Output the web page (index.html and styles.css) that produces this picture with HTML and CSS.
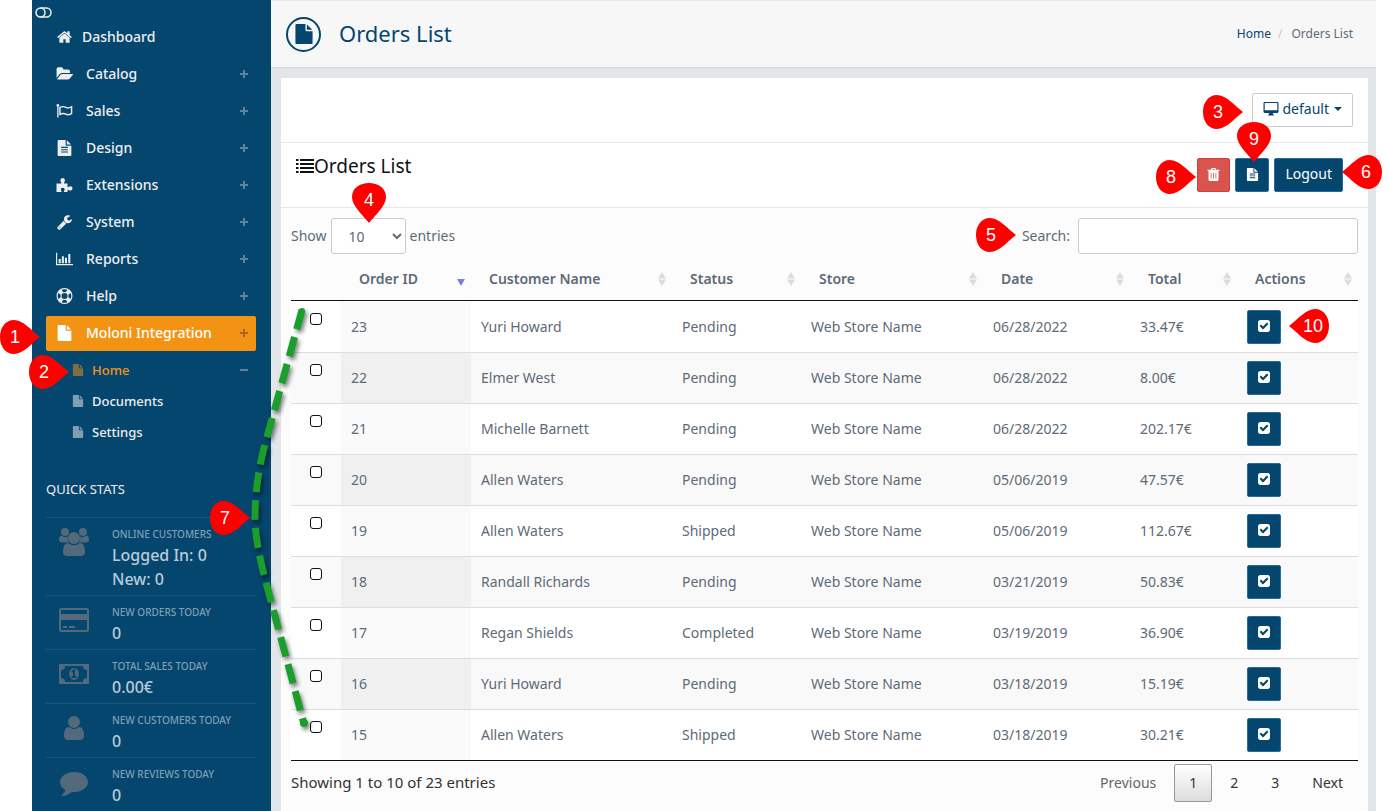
FILE: index.html
```html
<!DOCTYPE html>
<html lang="en">
<head>
  <meta charset="UTF-8">
  <meta name="viewport" content="width=device-width, initial-scale=1">
  <title>Orders List</title>
  <link rel="stylesheet" href="styles.css">
</head>
<body>

<!-- Icons -->
<svg class="sprite" aria-hidden="true">
  <symbol id="i-home" viewBox="0 0 1792 1792"><path d="M1472 992v480q0 26-19 45t-45 19h-384v-384h-256v384h-384q-26 0-45-19t-19-45v-480q0-1 .5-3t.5-3l575-474 575 474q1 2 1 6zm223-69l-62 74q-8 9-21 11h-3q-13 0-21-7l-692-577-692 577q-12 8-24 7-13-2-21-11l-62-74q-8-10-7-23.5t11-21.5l719-599q32-26 76-26t76 26l244 204v-195q0-14 9-23t23-9h192q14 0 23 9t9 23v408l219 182q10 8 11 21.5t-7 23.5z"/></symbol>
  <symbol id="i-folder" viewBox="0 0 1944 1792"><path d="M1943 952q0 31-31 66l-336 396q-43 51-120.5 86.5t-143.5 35.5h-1088q-34 0-60.5-13t-26.5-43q0-31 31-66l336-396q43-51 120.5-86.5t143.5-35.5h1088q34 0 60.5 13t26.5 43zm-343-344v160h-832q-94 0-197 47.5t-164 119.5l-337 396-5 6q0-4-.5-12.5t-.5-12.5v-960q0-92 66-158t158-66h320q92 0 158 66t66 158v32h544q92 0 158 66t66 158z"/></symbol>
  <symbol id="i-flag" viewBox="0 0 18 16"><path d="M2 2v13" stroke="currentColor" stroke-width="1.4" fill="none"/><circle cx="2" cy="2" r="1.4"/><path d="M4.2 4.2c3-1.6 4.800-.8 6.300 0s3.500.7 6-.7v7.200c-2.500 1.400-4.500 1.500-6 .7s-3.500-1.500-6.300.2z" stroke="currentColor" stroke-width="1.5" fill="none"/></symbol>
  <symbol id="i-file" viewBox="0 0 1792 1792"><path d="M1152 512v-472q22 14 36 28l408 408q14 14 28 36h-472zm-128 32q0 40 28 68t68 28h544v1056q0 40-28 68t-68 28h-1344q-40 0-68-28t-28-68v-1600q0-40 28-68t68-28h800v544z"/></symbol>
  <symbol id="i-filetext" viewBox="0 0 1792 1792"><path d="M1596 476q14 14 28 36h-472v-472q22 14 36 28zm-476 164h544v1056q0 40-28 68t-68 28h-1344q-40 0-68-28t-28-68v-1600q0-40 28-68t68-28h800v544q0 40 28 68t68 28zm160 736v-64q0-14-9-23t-23-9h-704q-14 0-23 9t-9 23v64q0 14 9 23t23 9h704q14 0 23-9t9-23zm0-256v-64q0-14-9-23t-23-9h-704q-14 0-23 9t-9 23v64q0 14 9 23t23 9h704q14 0 23-9t9-23zm0-256v-64q0-14-9-23t-23-9h-704q-14 0-23 9t-9 23v64q0 14 9 23t23 9h704q14 0 23-9t9-23z"/></symbol>
  <symbol id="i-puzzle" viewBox="0 0 16 16"><path d="M0 6.500h4.300c.6 0 .8-.5.4-1.100C4.200 4.700 4 4 4 3.200 4 2 4.900 1 6.200 1s2.200 1 2.200 2.200c0 .8-.3 1.400-.7 2.200-.3.600-.1 1.100.500 1.100H11v3c0 .6.500.8 1 .5.600-.5 1.100-.7 1.800-.7 1.200 0 2.200.9 2.200 2.100s-1 2.200-2.200 2.200c-.7 0-1.200-.3-1.800-.7-.5-.4-1-.1-1 .5V15H8c-.6 0-.9-.4-.5-1 .4-.5.6-.9.6-1.500 0-1-.8-1.700-1.900-1.700s-1.900.7-1.900 1.700c0 .6.200 1 .6 1.500.4.600.1 1-.5 1H0z"/></symbol>
  <symbol id="i-wrench" viewBox="0 0 1792 1792"><path d="M448 1472q0-26-19-45t-45-19-45 19-19 45 19 45 45 19 45-19 19-45zm644-420l-682 682q-37 37-90 37-52 0-91-37l-106-108q-38-36-38-90 0-53 38-91l681-681q39 98 114.500 173.500t173.500 114.500zm634-435q0 39-23 106-47 134-164.500 217.500t-258.500 83.500q-185 0-316.500-131.500t-131.500-316.500 131.500-316.500 316.500-131.500q58 0 121.500 16.500t107.500 46.500q16 11 16 28t-16 28l-293 169v224l193 107q5-3 79-48.500t135.500-81 70.500-35.500q15 0 23.500 10t8.500 25z"/></symbol>
  <symbol id="i-chart" viewBox="0 0 19 16"><path d="M0 1h1.300v12.700H19V15H0zM3 8h2.300v4.700H3zM6.500 5h2.300v7.700H6.500zM10 6.500h2.300v6.200H10zM13.700 2.500H16v10.200h-2.300z"/></symbol>
  <symbol id="i-ring" viewBox="0 0 16 16"><path fill-rule="evenodd" d="M8 0a8 8 0 1 0 0 16A8 8 0 0 0 8 0zM8 1.200c1 0 2 .2 2.900.6L9.300 4.200a4 4 0 0 0-2.600 0L5.100 1.800A6.800 6.800 0 0 1 8 1.200zM1.800 5.100l2.400 1.600a4 4 0 0 0 0 2.600l-2.400 1.600a6.800 6.800 0 0 1 0-5.800zM8 14.800c-1 0-2-.2-2.900-.6l1.600-2.400a4 4 0 0 0 2.600 0l1.600 2.400c-.9.4-1.900.6-2.900.6zM8 11a3 3 0 1 1 0-6 3 3 0 0 1 0 6zM14.200 10.900l-2.400-1.600a4 4 0 0 0 0-2.600l2.400-1.600a6.800 6.800 0 0 1 0 5.800z"/></symbol>
  <symbol id="i-toggle" viewBox="0 0 17 11"><g fill="none" stroke="currentColor" stroke-width="1.500"><path d="M5.500 1h6a4.500 4.500 0 0 1 0 9h-6"/><circle cx="5.500" cy="5.500" r="4.500"/></g></symbol>
  <symbol id="i-users" viewBox="0 0 30 28"><circle cx="6" cy="4" r="4"/><circle cx="24" cy="4" r="4"/><path d="M0 12c0-3 1-4.500 2.500-4.500 2 1.600 4.500 1.800 6.300 1-.3 2.500.2 4.500 1.500 6.000H3C1 14.500 0 13.500 0 12zM30 12c0-3-1-4.500-2.500-4.500-2 1.600-4.500 1.800-6.300 1 .3 2.500-.2 4.500-1.500 6H27c2 0 3-1 3-2.500z"/><circle cx="15" cy="10" r="6"/><path d="M4 24c0-6 2-9 5.500-9 3 3 8 3 11 0 3.500 0 5.500 3 5.500 9 0 2.500-1.500 4-4 4H8c-2.500 0-4-1.500-4-4z"/></symbol>
  <symbol id="i-card" viewBox="0 0 30 24"><path fill-rule="evenodd" d="M2.500 0h25A2.500 2.500 0 0 1 30 2.500v19a2.500 2.500 0 0 1-2.500 2.500h-25A2.500 2.500 0 0 1 0 21.500v-19A2.500 2.500 0 0 1 2.500 0zM2.500 2a.5.500 0 0 0-.5.500V6h26V2.500a.5.500 0 0 0-.5-.5zM2 12v9.500c0 .3.200.5.500.5h25c.3 0 .5-.2.500-.5V12zM4 18h4v2H4zM10 18h6v2h-6z"/></symbol>
  <symbol id="i-money" viewBox="0 0 30 20"><path fill-rule="evenodd" d="M0 0h30v20H0zM6 2a4 4 0 0 1-4 4v8a4 4 0 0 1 4 4h18a4 4 0 0 1 4-4V6a4 4 0 0 1-4-4z"/><ellipse cx="15" cy="10" rx="4.800" ry="6"/><path class="coin" d="M12.500 13h5M15 13V6.500l-2.300 1.800" /></symbol>
  <symbol id="i-user" viewBox="256 128 1280 1536"><path d="M1536 1399q0 109-62.500 187t-150.500 78h-854q-88 0-150.500-78t-62.500-187q0-85 8.500-160.500t31.500-152 58.500-131 94-89 134.500-34.500q131 128 313 128t313-128q76 0 134.500 34.500t94 89 58.500 131 31.500 152 8.500 160.500zm-256-887q0 159-112.500 271.500t-271.500 112.500-271.500-112.500-112.500-271.500 112.500-271.500 271.500-112.500 271.500 112.500 112.500 271.500z"/></symbol>
  <symbol id="i-comment" viewBox="0 256 1792 1536"><path d="M1792 896q0 174-120 321.500t-326 233-450 85.500q-70 0-145-8-198 175-460 242-49 14-114 22-17 2-30.500-9t-17.500-29v-1q-3-4-.5-12t2-10 4.500-9.500l6-9 7-8.500 8-9q7-8 31-34.500t34.500-38 31-39.500 32.500-51 27-59 26-76q-157-89-247.500-220t-90.500-281q0-130 71-248.500t191-204.500 286-136.500 348-50.500q244 0 450 85.500t326 233 120 321.500z"/></symbol>
  <symbol id="i-desktop" viewBox="0 0 15 14"><path fill-rule="evenodd" d="M1.200 0h12.600c.7 0 1.200.5 1.200 1.200v8.600c0 .7-.5 1.200-1.200 1.200H9.300l.4 1.400h.6v1H4.700v-1h.6L5.700 11H1.200C.5 11 0 10.500 0 9.800V1.200C0 .5.500 0 1.200 0zM1.200 1v7.200h12.600V1z"/></symbol>
  <symbol id="i-list" viewBox="0 0 18 14"><path d="M0 0h2.500v2H0zM0 4h2.500v2H0zM0 8h2.500v2H0zM0 12h2.500v2H0zM4 0h14v2H4zM4 4h14v2H4zM4 8h14v2H4zM4 12h14v2H4z"/></symbol>
  <symbol id="i-trash" viewBox="0 0 12 13"><path fill-rule="evenodd" d="M4.200 0h3.600l.8 1.800H12V3h-1v8.500c0 .9-.6 1.500-1.300 1.500H2.300C1.600 13 1 12.400 1 11.500V3H0V1.800h3.400zM4.900.9l-.4.900h3l-.4-.9zM3.200 4.800v5.700H4V4.800zM5.600 4.800v5.700h.8V4.800zM8 4.800v5.700h.8V4.800z"/></symbol>
  <symbol id="i-check" viewBox="128 128 1536 1536"><path d="M813 1299l614-614q19-19 19-45t-19-45l-102-102q-19-19-45-19t-45 19l-467 467-211-211q-19-19-45-19t-45 19l-102 102q-19 19-19 45t19 45l358 358q19 19 45 19t45-19zm851-883v960q0 119-84.500 203.500t-203.500 84.500h-960q-119 0-203.500-84.500t-84.500-203.500v-960q0-119 84.500-203.500t203.500-84.500h960q119 0 203.500 84.500t84.500 203.500z"/></symbol>
  <symbol id="i-sort" viewBox="0 0 8 14"><path d="M4 0l4 6.500H0zM0 7.500h8L4 14z"/></symbol>
  <symbol id="i-desc" viewBox="0 0 8 14"><path d="M0 7h8l-4 7z"/></symbol>
  <symbol id="drop-right" viewBox="0 0 40 34"><path d="M40 17C31 10 23 0 14 0 5 0 0 8 0 17s5 17 14 17c9 0 17-10 26-17z"/></symbol>
  <symbol id="drop-left" viewBox="0 0 40 34"><path d="M0 17C9 10 17 0 26 0c9 0 14 8 14 17s-5 17-14 17C17 34 9 24 0 17z"/></symbol>
  <symbol id="drop-down" viewBox="0 0 34 40"><path d="M17 40C10 31 0 23 0 14 0 5 8 0 17 0s17 5 17 14c0 9-10 17-17 26z"/></symbol>
</svg>

<div class="page">
  <aside class="sidebar">
    <button class="toggle" aria-label="Toggle menu"><svg><use href="#i-toggle"/></svg></button>

    <nav>
      <ul class="menu">
        <li><a class="first" href="#"><svg><use href="#i-home"/></svg>Dashboard</a></li>
        <li><a href="#"><svg><use href="#i-folder"/></svg>Catalog<i class="plus"></i></a></li>
        <li><a href="#"><svg><use href="#i-flag"/></svg>Sales<i class="plus"></i></a></li>
        <li><a href="#"><svg><use href="#i-filetext"/></svg>Design<i class="plus"></i></a></li>
        <li><a href="#"><svg><use href="#i-puzzle"/></svg>Extensions<i class="plus"></i></a></li>
        <li><a href="#"><svg><use href="#i-wrench"/></svg>System<i class="plus"></i></a></li>
        <li><a href="#"><svg><use href="#i-chart"/></svg>Reports<i class="plus"></i></a></li>
        <li><a href="#"><svg><use href="#i-ring"/></svg>Help<i class="plus"></i></a></li>
        <li><a class="active" href="#"><svg><use href="#i-file"/></svg>Moloni Integration<i class="plus"></i></a></li>
      </ul>
      <ul class="submenu">
        <li><a class="current" href="#"><svg><use href="#i-file"/></svg>Home<i class="minus"></i></a></li>
        <li><a href="#"><svg><use href="#i-file"/></svg>Documents</a></li>
        <li><a href="#"><svg><use href="#i-file"/></svg>Settings</a></li>
      </ul>
    </nav>

    <section class="stats">
      <h2>QUICK STATS</h2>
      <div class="stat">
        <svg class="users"><use href="#i-users"/></svg>
        <div><h3>ONLINE CUSTOMERS</h3><p>Logged In: 0</p><p>New: 0</p></div>
      </div>
      <div class="stat">
        <svg class="card"><use href="#i-card"/></svg>
        <div><h3>NEW ORDERS TODAY</h3><p>0</p></div>
      </div>
      <div class="stat">
        <svg class="money"><use href="#i-money"/></svg>
        <div><h3>TOTAL SALES TODAY</h3><p>0.00€</p></div>
      </div>
      <div class="stat">
        <svg class="user"><use href="#i-user"/></svg>
        <div><h3>NEW CUSTOMERS TODAY</h3><p>0</p></div>
      </div>
      <div class="stat">
        <svg class="comment"><use href="#i-comment"/></svg>
        <div><h3>NEW REVIEWS TODAY</h3><p>0</p></div>
      </div>
    </section>
  </aside>

  <main>
    <header class="topbar">
      <span class="badge"><svg><use href="#i-file"/></svg></span>
      <h1>Orders List</h1>
      <div class="breadcrumb"><a href="#">Home</a><span class="slash">/</span><span>Orders List</span></div>
    </header>

    <div class="content">
      <div class="panel">
        <div class="store-row">
          <button class="btn-default"><svg><use href="#i-desktop"/></svg>default<i class="caret"></i></button>
        </div>
        <div class="heading">
          <h2><svg><use href="#i-list"/></svg>Orders List</h2>
          <div class="actions">
            <button class="btn danger" aria-label="Delete"><svg><use href="#i-trash"/></svg></button>
            <button class="btn" aria-label="Documents"><svg><use href="#i-filetext"/></svg></button>
            <button class="btn logout">Logout</button>
          </div>
        </div>

        <div class="body">
          <div class="filters">
            <label>Show
              <select><option>10</option><option>25</option><option>50</option></select>
              entries</label>
            <label>Search: <input type="search"></label>
          </div>

          <table>
            <colgroup>
              <col class="c-check"><col class="c-id"><col class="c-name"><col class="c-status">
              <col class="c-store"><col class="c-date"><col class="c-total"><col class="c-actions">
            </colgroup>
            <thead>
              <tr>
                <th></th>
                <th><div>Order ID<svg class="desc"><use href="#i-desc"/></svg></div></th>
                <th><div>Customer Name<svg><use href="#i-sort"/></svg></div></th>
                <th><div>Status<svg><use href="#i-sort"/></svg></div></th>
                <th><div>Store<svg><use href="#i-sort"/></svg></div></th>
                <th><div>Date<svg><use href="#i-sort"/></svg></div></th>
                <th><div>Total<svg><use href="#i-sort"/></svg></div></th>
                <th><div>Actions<svg><use href="#i-sort"/></svg></div></th>
              </tr>
            </thead>
            <tbody>
              <tr><td><input type="checkbox" aria-label="Order 23"></td><td>23</td><td>Yuri Howard</td><td>Pending</td><td>Web Store Name</td><td>06/28/2022</td><td>33.47€</td><td><button class="btn" aria-label="Select"><svg><use href="#i-check"/></svg></button></td></tr>
              <tr><td><input type="checkbox" aria-label="Order 22"></td><td>22</td><td>Elmer West</td><td>Pending</td><td>Web Store Name</td><td>06/28/2022</td><td>8.00€</td><td><button class="btn" aria-label="Select"><svg><use href="#i-check"/></svg></button></td></tr>
              <tr><td><input type="checkbox" aria-label="Order 21"></td><td>21</td><td>Michelle Barnett</td><td>Pending</td><td>Web Store Name</td><td>06/28/2022</td><td>202.17€</td><td><button class="btn" aria-label="Select"><svg><use href="#i-check"/></svg></button></td></tr>
              <tr><td><input type="checkbox" aria-label="Order 20"></td><td>20</td><td>Allen Waters</td><td>Pending</td><td>Web Store Name</td><td>05/06/2019</td><td>47.57€</td><td><button class="btn" aria-label="Select"><svg><use href="#i-check"/></svg></button></td></tr>
              <tr><td><input type="checkbox" aria-label="Order 19"></td><td>19</td><td>Allen Waters</td><td>Shipped</td><td>Web Store Name</td><td>05/06/2019</td><td>112.67€</td><td><button class="btn" aria-label="Select"><svg><use href="#i-check"/></svg></button></td></tr>
              <tr><td><input type="checkbox" aria-label="Order 18"></td><td>18</td><td>Randall Richards</td><td>Pending</td><td>Web Store Name</td><td>03/21/2019</td><td>50.83€</td><td><button class="btn" aria-label="Select"><svg><use href="#i-check"/></svg></button></td></tr>
              <tr><td><input type="checkbox" aria-label="Order 17"></td><td>17</td><td>Regan Shields</td><td>Completed</td><td>Web Store Name</td><td>03/19/2019</td><td>36.90€</td><td><button class="btn" aria-label="Select"><svg><use href="#i-check"/></svg></button></td></tr>
              <tr><td><input type="checkbox" aria-label="Order 16"></td><td>16</td><td>Yuri Howard</td><td>Pending</td><td>Web Store Name</td><td>03/18/2019</td><td>15.19€</td><td><button class="btn" aria-label="Select"><svg><use href="#i-check"/></svg></button></td></tr>
              <tr><td><input type="checkbox" aria-label="Order 15"></td><td>15</td><td>Allen Waters</td><td>Shipped</td><td>Web Store Name</td><td>03/18/2019</td><td>30.21€</td><td><button class="btn" aria-label="Select"><svg><use href="#i-check"/></svg></button></td></tr>
            </tbody>
          </table>

          <div class="table-footer">
            <span class="info">Showing 1 to 10 of 23 entries</span>
            <div class="pager">
              <a class="disabled" href="#">Previous</a>
              <a class="on" href="#">1</a>
              <a href="#">2</a>
              <a href="#">3</a>
              <a href="#">Next</a>
            </div>
          </div>
        </div>
      </div>
    </div>
  </main>

  <!-- Numbered markers -->
  <svg class="trail" viewBox="0 0 64 430">
    <path d="M56 7L18 145Q9 180 9 215Q9 240 22 287L58 421"/>
    <circle cx="56" cy="8" r="3"/>
    <circle cx="58" cy="420" r="4"/>
  </svg>
  <span class="pin right p1"><svg><use href="#drop-right"/></svg><b>1</b></span>
  <span class="pin right p2"><svg><use href="#drop-right"/></svg><b>2</b></span>
  <span class="pin right p3"><svg><use href="#drop-right"/></svg><b>3</b></span>
  <span class="pin down p4"><svg><use href="#drop-down"/></svg><b>4</b></span>
  <span class="pin right p5"><svg><use href="#drop-right"/></svg><b>5</b></span>
  <span class="pin left p6"><svg><use href="#drop-left"/></svg><b>6</b></span>
  <span class="pin right p7"><svg><use href="#drop-right"/></svg><b>7</b></span>
  <span class="pin right p8"><svg><use href="#drop-right"/></svg><b>8</b></span>
  <span class="pin down p9"><svg><use href="#drop-down"/></svg><b>9</b></span>
  <span class="pin left p10"><svg><use href="#drop-left"/></svg><b>10</b></span>
</div>

</body>
</html>
```

FILE: styles.css
```css
* {
  margin: 0;
  padding: 0;
  box-sizing: border-box;
}

body {
  font-family: "Noto Sans", "Open Sans", sans-serif;
  font-size: 14px;
  line-height: 20px;
  color: #5d6a77;
  background: #fff;
}

a {
  color: inherit;
  text-decoration: none;
}

ul {
  list-style: none;
}

button, input, select {
  font: inherit;
}

button {
  cursor: pointer;
}

svg {
  fill: currentColor;
  flex: none;
}

.sprite {
  display: none;
}

.page {
  position: relative;
  display: flex;
  height: 100vh;
  padding: 0 12px 0 32px;
  overflow: hidden;
}

/* Sidebar */
.sidebar {
  width: 239px;
  flex: none;
  background: #05466f;
  color: #eee;
}

.toggle {
  display: flex;
  align-items: flex-start;
  width: 100%;
  height: 20px;
  padding: 7px 3px 0;
  border: none;
  background: none;
  color: #eee;
}

.toggle svg {
  width: 17px;
  height: 11px;
}

.menu a {
  display: flex;
  align-items: center;
  height: 35px;
  margin: 0 15px 2px 14px;
  padding: 0 8px 1px 10px;
  border-radius: 2px;
  font-weight: 500;
}

.menu svg {
  width: 17px;
  height: 16px;
  margin-right: 13px;
}

.menu a.first svg {
  margin-right: 9px;
}

.menu a.active {
  background: #f39314;
  color: #fff;
}

.plus, .minus {
  width: 8px;
  height: 8px;
  margin-left: auto;
  background: linear-gradient(#5c829c, #5c829c) center / 8px 2px no-repeat,
              linear-gradient(#5c829c, #5c829c) center / 2px 8px no-repeat;
}

.minus {
  background: linear-gradient(#5c829c, #5c829c) center / 8px 2px no-repeat;
}

.active .plus {
  background: linear-gradient(#a5671b, #a5671b) center / 8px 2px no-repeat,
              linear-gradient(#a5671b, #a5671b) center / 2px 8px no-repeat;
}

.submenu {
  padding-top: 2px;
  font-size: 13px;
  font-weight: 500;
}

.submenu a {
  display: flex;
  align-items: center;
  height: 31px;
  padding: 0 23px 1px 40px;
}

.submenu svg {
  width: 12px;
  height: 12px;
  margin-right: 8px;
  color: #7f9fb3;
}

.submenu .current {
  color: #f39314;
}

.submenu .current svg {
  color: #7e6e41;
}

.stats {
  padding: 31px 15px 0 14px;
}

.stats h2 {
  margin-bottom: 18px;
  font-size: 13px;
  font-weight: 400;
  line-height: 20px;
}

.stat {
  display: flex;
  padding: 8px 0 4px;
  border-top: 1px solid #1a557b;
}

.stat svg {
  width: 30px;
  margin: 1px 23px 0 13px;
  color: #53697c;
}

.stat .users { height: 28px; margin-top: 2px; }
.stat .card { height: 24px; margin-top: 4px; }
.stat .money { height: 20px; margin-top: 6px; }
.stat .user { height: 24px; margin-top: 4px; }
.stat .comment { height: 24px; margin-top: 6px; }

.coin {
  fill: none;
  stroke: #05466f;
  stroke-width: 2;
}

.stat h3 {
  font-size: 10px;
  font-weight: 500;
  line-height: 16px;
  color: #7f9fb3;
}

.stat p {
  font-size: 16px;
  font-weight: 500;
  line-height: 24px;
  color: #b9cbd7;
}

.stat h3 + p {
  margin-top: 1px;
}

/* Main area */
main {
  display: flex;
  flex-direction: column;
  flex: 1;
  min-width: 0;
}

.topbar {
  display: flex;
  flex: none;
  align-items: center;
  height: 68px;
  padding: 0 23px 0 15px;
  border-top: 1px solid #eaeaea;
  border-bottom: 1px solid #d0d7db;
  background: #f7f7f7;
}

.badge {
  display: flex;
  align-items: center;
  justify-content: center;
  width: 35px;
  height: 35px;
  border: 2px solid #05466f;
  border-radius: 50%;
  color: #05466f;
}

.badge svg {
  width: 20px;
  height: 20px;
}

h1 {
  margin-left: 18px;
  padding-bottom: 3px;
  font-size: 22px;
  font-weight: 400;
  line-height: 30px;
  color: #05466f;
}

.breadcrumb {
  display: flex;
  gap: 7px;
  margin-left: auto;
  font-size: 12px;
}

.breadcrumb a {
  color: #05466f;
}

.slash {
  margin-right: 2px;
  color: #ccc;
}

.content {
  flex: 1;
  padding: 10px 8px 0 10px;
  background: #e2e6e9;
}

.panel {
  height: 100%;
  border-radius: 2px;
  background: #fcfcfc;
}

.store-row {
  display: flex;
  justify-content: flex-end;
  padding: 15px;
  border-bottom: 1px solid #eaeaea;
  background: #fff;
}

.btn-default {
  display: flex;
  align-items: center;
  height: 34px;
  padding: 0 10px 2px;
  border: 1px solid #ccc;
  border-radius: 2px;
  background: #fff;
  color: #05466f;
}

.btn-default svg {
  width: 16px;
  height: 14px;
  margin-right: 4px;
}

.caret {
  margin-left: 5px;
  border: 4px solid transparent;
  border-top-color: #05466f;
  border-bottom: none;
}

.heading {
  display: flex;
  align-items: flex-start;
  justify-content: space-between;
  padding: 15px 25px 15px 15px;
  border-bottom: 1px solid #e6e6e6;
  background: #fff;
}

.heading h2 {
  display: flex;
  align-items: center;
  font-size: 19px;
  font-weight: 400;
  line-height: 16px;
  color: #111;
}

.heading h2 svg {
  width: 18px;
  height: 14px;
}

.actions {
  display: flex;
  gap: 5px;
}

.btn {
  display: flex;
  align-items: center;
  justify-content: center;
  width: 34px;
  height: 34px;
  padding-bottom: 2px;
  border: 1px solid #2a69a0;
  border-radius: 2px;
  background: #05466f;
  color: #fff;
}

.btn svg {
  width: 12px;
  height: 12px;
}

.actions svg {
  width: 13px;
  height: 13px;
}

.btn.danger {
  width: 33px;
  border-color: #d43f3a;
  background: #d9534f;
}

.btn.logout {
  width: auto;
  padding: 0 10px 2px;
}

.body {
  padding: 10px;
}

.filters {
  display: flex;
  justify-content: space-between;
}

.filters label {
  display: flex;
  align-items: center;
  gap: 4px;
}

.filters label + label {
  gap: 8px;
}

.filters select, .filters input {
  height: 36px;
  border: 1px solid #ccc;
  border-radius: 3px;
  background: #fff;
  color: #5d6a77;
}

.filters select {
  width: 75px;
  padding-left: 13px;
}

.filters input {
  width: 280px;
}

table {
  width: 100%;
  margin-top: 6px;
  border-collapse: separate;
  border-spacing: 0;
  table-layout: fixed;
  border-bottom: 1px solid #111;
}

.c-check { width: 50px; }
.c-id { width: 130px; }
.c-name { width: 201px; }
.c-status { width: 129px; }
.c-store { width: 182px; }
.c-date { width: 147px; }
.c-total { width: 107px; }
.c-actions { width: 121px; }

th {
  padding: 9px 6px 11px 18px;
  border-bottom: 1px solid #111;
  text-align: left;
  font-weight: 600;
}

th div {
  display: flex;
  align-items: center;
  justify-content: space-between;
}

th svg {
  width: 8px;
  height: 14px;
  color: #dcdcdc;
}

th svg.desc {
  color: #7b7fe0;
}

td {
  padding: 8px 10px;
  border-top: 1px solid #ddd;
  background: #fff;
}

tbody tr:first-child td {
  border-top-color: #fff;
}

td:first-child {
  padding: 11px 19px;
  vertical-align: top;
}

td:nth-child(2) {
  background: #fafafa;
}

tr:nth-child(even) td {
  background: #f9f9f9;
}

tr:nth-child(even) td:nth-child(2) {
  background: #f0f0f0;
}

td input {
  display: block;
  appearance: none;
  width: 12px;
  height: 12px;
  border: 1px solid #111;
  border-radius: 3px;
  background: #fff;
}

.table-footer {
  display: flex;
  align-items: center;
  justify-content: space-between;
  padding-top: 3px;
  color: #333;
}

.info {
  padding-bottom: 2px;
  font-size: 15px;
}

.pager {
  display: flex;
  gap: 3px;
}

.pager a {
  padding: 8px 14px;
  border: 1px solid transparent;
  border-radius: 2px;
}

.pager .disabled {
  color: #666;
}

.pager .on {
  border-color: #979797;
  background: linear-gradient(#fff, #dcdcdc);
}

/* Markers lie over the page */
.trail {
  position: absolute;
  top: 303px;
  left: 246px;
  width: 64px;
  height: 430px;
  filter: drop-shadow(2px 3px 2px rgba(0, 0, 0, 0.5));
}

.trail path {
  fill: none;
  stroke: #1a9e2c;
  stroke-width: 7;
  stroke-dasharray: 20 8;
}

.trail circle {
  fill: #1a9e2c;
}

.pin {
  position: absolute;
  display: grid;
  align-items: center;
  width: 40px;
  height: 34px;
  color: #f00;
}

.pin svg, .pin b {
  grid-area: 1 / 1;
}

.pin svg {
  width: 100%;
  height: 100%;
}

.pin b {
  font-family: "Liberation Sans", sans-serif;
  font-size: 18px;
  font-weight: 400;
  text-align: center;
  color: #fff;
}

.pin.right b { padding-right: 10px; }
.pin.left b { padding-left: 8px; }

.pin.down {
  width: 34px;
  height: 40px;
}

.pin.down b { padding-bottom: 6px; }

.p1 { top: 320px; left: 0; }
.p2 { top: 355px; left: 29px; }
.p3 { top: 95px; right: 145px; }
.p4 { top: 183px; left: 352px; }
.p5 { top: 218px; right: 372px; }
.p6 { top: 155px; right: 6px; }
.p7 { top: 501px; left: 210px; }
.p8 { top: 160px; right: 192px; }
.p9 { top: 122px; right: 117px; }
.p10 { top: 309px; right: 59px; }
```
